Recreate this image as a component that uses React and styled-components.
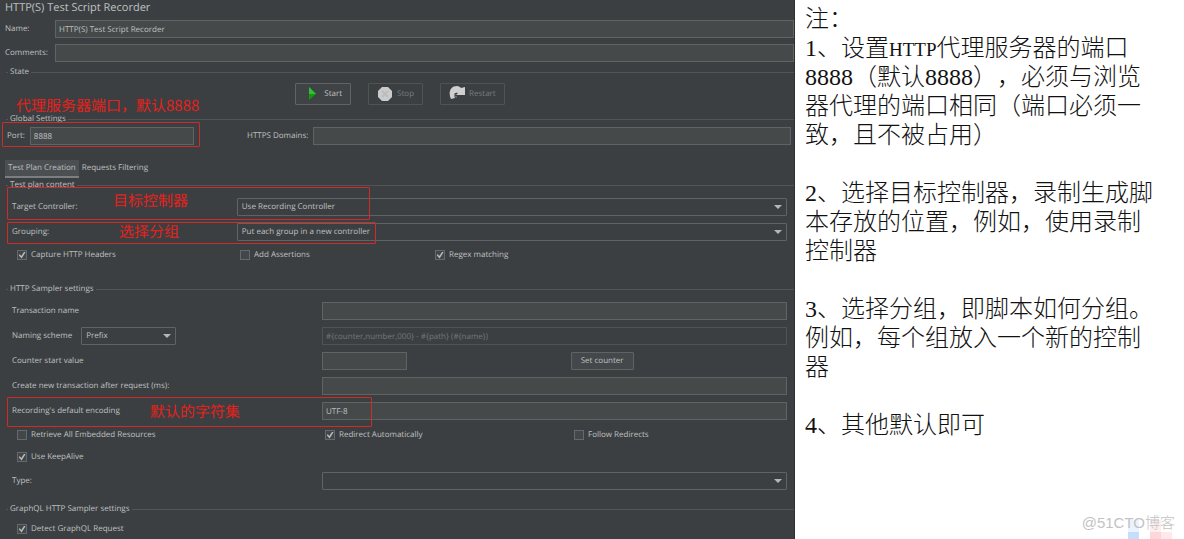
import React from 'react';
import styled, { createGlobalStyle } from 'styled-components';

const GlobalStyle = createGlobalStyle`
  * {
    box-sizing: border-box;
  }

  body {
    margin: 0;
    background: #fff;
    font-family: 'Open Sans', 'Noto Sans CJK SC', sans-serif;
  }
`;

const Page = styled.div`
  display: grid;
  grid-template-columns: 795fr 389fr;
  min-height: 100vh;
  overflow: hidden;
`;

const Recorder = styled.main`
  background: #3c3f41;
  color: #bfc1c2;
  font-size: 8px;
  line-height: 14px;
  text-rendering: geometricPrecision;
  border-right: 1px solid #2e3133;
  overflow: hidden;

  input,
  select,
  button {
    font: inherit;
    color: inherit;
    margin: 0;
    text-rendering: inherit;
  }
`;

const Title = styled.h1`
  margin: 0 0 5px 5px;
  font-size: 11px;
  line-height: 15px;
  font-weight: 400;
`;

const TopFields = styled.div`
  display: grid;
  gap: 6px;
  padding: 0 0 3px 5px;
`;

const TopField = styled.div`
  display: flex;
  align-items: center;
  gap: 5px;

  label {
    min-width: 45px;
  }
`;

const TextInput = styled.input`
  flex: 1;
  width: ${(props) => props.$width || '100%'};
  min-width: 0;
  height: 18px;
  padding: 0 3px;
  border: 1px solid #5f6364;
  border-radius: 0;
  background: #45494a;
  outline: 0;

  &:disabled {
    background: #3c3f41;
    border-color: #505354;
    color: #747778;
  }
`;

const Legend = styled.h2`
  display: flex;
  align-items: center;
  gap: 2px;
  margin: ${(props) => props.$top || 0} 0 0 6px;
  font-size: 8px;
  line-height: 14px;
  font-weight: 400;

  &::before,
  &::after {
    content: '';
    height: 1px;
    width: 2px;
    background: #515557;
  }

  &::after {
    flex: 1;
  }
`;

const Actions = styled.div`
  display: flex;
  justify-content: center;
  gap: 17px;
  padding: 4px 0 7px 6px;
`;

const Button = styled.button`
  display: flex;
  align-items: center;
  justify-content: center;
  gap: 4px;
  height: ${(props) => (props.$small ? '18px' : '22px')};
  padding: 0 ${(props) => (props.$small ? '9px' : '8px')};
  border: 1px solid #5f6364;
  border-radius: 1px;
  background: ${(props) => (props.$small ? '#44484a' : '#3f4345')};

  &:disabled {
    border-color: #505354;
    background: #3c3f41;
    color: #787b7c;
  }

  svg {
    width: 16px;
    height: 16px;
  }
`;

const ServerRow = styled.div`
  display: grid;
  grid-template-columns: 187fr 544fr;
  gap: 53px;
  padding: 1px 3px 0 7px;
  margin-bottom: 15px;
`;

const InlineField = styled.div`
  position: relative;
  display: flex;
  align-items: center;
  gap: 5px;
`;

const Tabs = styled.div`
  display: flex;
  padding-left: 5px;
`;

const Tab = styled.button`
  height: 18px;
  padding: 0 3px;
  border: 0;
  border-bottom: 2px solid ${(props) => (props.$active ? '#7b7f81' : 'transparent')};
  background: ${(props) => (props.$active ? '#4b4f51' : 'transparent')};
`;

const Rows = styled.div`
  display: grid;
  gap: ${(props) => props.$gap || '7px'};
  padding: ${(props) => props.$top || '6px'} 7px 0 12px;
`;

const Row = styled.div`
  position: relative;
  display: grid;
  grid-template-columns: ${(props) => props.$columns || '2fr 3fr'};
  align-items: center;
`;

const Scheme = styled.div`
  display: flex;
  align-items: center;
  gap: 9px;
`;

const SelectBox = styled.div`
  position: relative;
  width: ${(props) => props.$width || '100%'};

  &::after {
    content: '';
    position: absolute;
    top: 7px;
    right: 5px;
    border: 4px solid transparent;
    border-top-color: #b4b6b7;
    border-bottom: 0;
    pointer-events: none;
  }

  select {
    display: block;
    width: 100%;
    height: 18px;
    padding: 0 16px 0 4px;
    border: 1px solid #5f6364;
    border-radius: 1px;
    background: #3c3f41;
    appearance: none;
    outline: 0;
  }
`;

const Checks = styled.div`
  display: grid;
  grid-template-columns: ${(props) => props.$columns};
  padding-left: 5px;
`;

const CheckLabel = styled.label`
  display: flex;
  align-items: center;
  gap: 4px;

  input {
    display: grid;
    place-items: center;
    width: 10px;
    height: 10px;
    border: 1px solid #66696b;
    background: #43474a;
    appearance: none;
  }

  input:checked::before {
    content: '';
    width: 7px;
    height: 7px;
    background: #b9bbbc;
    clip-path: polygon(0 50%, 18% 38%, 40% 66%, 82% 0, 100% 12%, 44% 100%);
  }
`;

const CounterCell = styled.div`
  display: flex;
  justify-content: space-between;
  padding-right: 33%;
`;

/* red marker frame laid over the form */
const Frame = styled.span`
  position: absolute;
  z-index: 1;
  top: ${(props) => props.$top};
  left: -5px;
  width: ${(props) => props.$width};
  height: ${(props) => props.$height};
  border: 1px solid #d12b28;
  border-radius: 1px;
  pointer-events: none;
`;

const Note = styled.span`
  position: absolute;
  top: ${(props) => props.$top};
  left: ${(props) => props.$left};
  color: #e5211c;
  font-family: 'Noto Sans CJK SC', sans-serif;
  font-size: 15px;
  line-height: 20px;
  white-space: nowrap;
  pointer-events: none;
`;

const Notes = styled.aside`
  position: relative;
  padding: 5px 0 0 10px;
  background: #fff;
  color: #111;
  font-family: 'Liberation Serif', 'Noto Sans CJK SC', serif;
  font-size: 24px;
  font-weight: 300;
  line-height: 29px;
  text-spacing-trim: space-all;
  white-space: nowrap;

  p {
    margin: 0 0 29px;
  }

  small {
    font-size: 19px;
    line-height: 20px;
  }
`;

const Watermark = styled.div`
  position: absolute;
  right: 9px;
  bottom: 6px;
  color: #c3c3c3;
  font-family: 'Liberation Sans', 'Noto Sans CJK SC', sans-serif;
  font-size: 15px;
  line-height: 20px;
`;

const Mosaic = styled.svg`
  position: absolute;
  right: 12px;
  bottom: 0;
  width: 44px;
  height: 19px;
`;

const PlayIcon = () => (
  <svg viewBox='0 0 16 16' aria-hidden='true'>
    <path d='M5 1v13l7-6z' fill='#0f9a0f' />
    <path d='M5 1v7h7z' fill='#35bf35' />
  </svg>
);

const StopIcon = () => (
  <svg viewBox='0 0 16 16' aria-hidden='true'>
    <path d='M5 1h6l4 4v6l-4 4H5l-4-4V5z' fill='#cbcbcb' />
    <path d='M5 5l6 6M11 5l-6 6' stroke='#bcbcbc' strokeWidth='2' />
  </svg>
);

const RestartIcon = () => (
  <svg viewBox='0 0 16 16' aria-hidden='true'>
    <path
      d='M2 13C-1 7 1 0 8 0c2 0 3 1 4 2l4-1v8H7l2-2C6 6 4 8 6 12z'
      fill='#cfcfcf'
    />
    <path d='M6 8c-1 2 0 3 2 3' stroke='#8b8d8e' strokeWidth='1' fill='none' />
  </svg>
);

const Select = ({ id, value, width }) => (
  <SelectBox $width={width}>
    <select id={id} defaultValue={value}>
      <option>{value}</option>
    </select>
  </SelectBox>
);

const Check = ({ children, checked }) => (
  <CheckLabel>
    <input type='checkbox' defaultChecked={checked} />
    {children}
  </CheckLabel>
);

const App = () => {
  return (
    <Page>
      <GlobalStyle />
      <Recorder>
        <Title>HTTP(S) Test Script Recorder</Title>
        <TopFields>
          <TopField>
            <label htmlFor='name'>Name:</label>
            <TextInput id='name' defaultValue='HTTP(S) Test Script Recorder' />
          </TopField>
          <TopField>
            <label htmlFor='comments'>Comments:</label>
            <TextInput id='comments' />
          </TopField>
        </TopFields>

        <Legend>State</Legend>
        <Actions>
          <Button type='button'>
            <PlayIcon />
            Start
          </Button>
          <Button type='button' disabled>
            <StopIcon />
            Stop
          </Button>
          <Button type='button' disabled>
            <RestartIcon />
            Restart
          </Button>
        </Actions>

        <Legend>Global Settings</Legend>
        <ServerRow>
          <InlineField>
            <label htmlFor='port'>Port:</label>
            <TextInput id='port' defaultValue='8888' />
            <Frame $top='-5px' $width='198px' $height='25px' />
            <Note $top='-31px' $left='9px'>
              代理服务器端口，默认8888
            </Note>
          </InlineField>
          <InlineField>
            <label htmlFor='domains'>HTTPS Domains:</label>
            <TextInput id='domains' />
          </InlineField>
        </ServerRow>

        <Tabs role='tablist'>
          <Tab type='button' role='tab' aria-selected='true' $active>
            Test Plan Creation
          </Tab>
          <Tab type='button' role='tab' aria-selected='false'>
            Requests Filtering
          </Tab>
        </Tabs>

        <Legend>Test plan content</Legend>
        <Rows>
          <Row $columns='29fr 71fr'>
            <label htmlFor='target'>Target Controller:</label>
            <Select id='target' value='Use Recording Controller' />
            <Frame $top='-11px' $width='363px' $height='33px' />
            <Note $top='-7px' $left='101px'>
              目标控制器
            </Note>
          </Row>
          <Row $columns='29fr 71fr'>
            <label htmlFor='grouping'>Grouping:</label>
            <Select id='grouping' value='Put each group in a new controller' />
            <Frame $top='-1px' $width='369px' $height='22px' />
            <Note $top='-1px' $left='107px'>
              选择分组
            </Note>
          </Row>
          <Checks $columns='223fr 195fr 352fr'>
            <Check checked>Capture HTTP Headers</Check>
            <Check>Add Assertions</Check>
            <Check checked>Regex matching</Check>
          </Checks>
        </Rows>

        <Legend $top='20px'>HTTP Sampler settings</Legend>
        <Rows>
          <Row>
            <label htmlFor='transaction'>Transaction name</label>
            <TextInput id='transaction' />
          </Row>
          <Row>
            <Scheme>
              <label htmlFor='scheme'>Naming scheme</label>
              <Select id='scheme' value='Prefix' width='95px' />
            </Scheme>
            <TextInput
              disabled
              aria-label='Naming pattern'
              defaultValue='#{counter,number,000} - #{path} (#{name})'
            />
          </Row>
          <Row>
            <label htmlFor='counter'>Counter start value</label>
            <CounterCell>
              <div>
                <TextInput id='counter' $width='85px' />
              </div>
              <Button type='button' $small>
                Set counter
              </Button>
            </CounterCell>
          </Row>
          <Row>
            <label htmlFor='after'>Create new transaction after request (ms):</label>
            <TextInput id='after' />
          </Row>
          <Row>
            <label htmlFor='encoding'>Recording's default encoding</label>
            <TextInput id='encoding' defaultValue='UTF-8' />
            <Frame $top='-5px' $width='365px' $height='30px' />
            <Note $top='0' $left='138px'>
              默认的字符集
            </Note>
          </Row>
        </Rows>
        <Rows $gap='8px' $top='8px'>
          <Checks $columns='308fr 249fr 213fr'>
            <Check>Retrieve All Embedded Resources</Check>
            <Check checked>Redirect Automatically</Check>
            <Check>Follow Redirects</Check>
          </Checks>
          <Checks $columns='1fr'>
            <Check checked>Use KeepAlive</Check>
          </Checks>
          <Row>
            <label htmlFor='type'>Type:</label>
            <Select id='type' value='' />
          </Row>
        </Rows>

        <Legend $top='12px'>GraphQL HTTP Sampler settings</Legend>
        <Rows>
          <Checks $columns='1fr'>
            <Check checked>Detect GraphQL Request</Check>
          </Checks>
        </Rows>
      </Recorder>

      <Notes>
        <div>注：</div>
        <p>
          1、设置<small>HTTP</small>代理服务器的端口
          <br />
          8888（默认8888），必须与浏览
          <br />
          器代理的端口相同（端口必须一
          <br />
          致，且不被占用）
        </p>
        <p>
          2、选择目标控制器，录制生成脚
          <br />
          本存放的位置，例如，使用录制
          <br />
          控制器
        </p>
        <p>
          3、选择分组，即脚本如何分组。
          <br />
          例如，每个组放入一个新的控制
          <br />
          器
        </p>
        <p>4、其他默认即可</p>
        <Mosaic viewBox='0 0 44 19' aria-hidden='true'>
          <path d='M0 0h11v12H0z' fill='#eaf3ff' />
          <path d='M0 12h11v7H0z' fill='#c5defc' />
          <path d='M22 0h11v12H22z' fill='#ffeeee' />
          <path d='M22 12h11v7H22z' fill='#fcd7da' />
          <path d='M33 12h11v7H33z' fill='#ffe8ea' />
        </Mosaic>
        <Watermark>@51CTO博客</Watermark>
      </Notes>
    </Page>
  );
};

export default App;
